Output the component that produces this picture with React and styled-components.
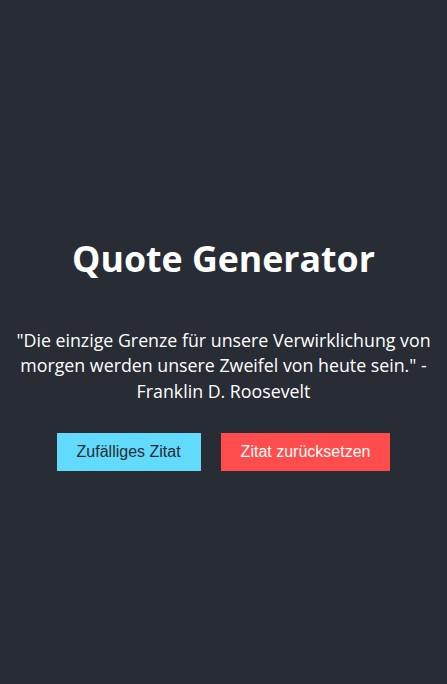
import styled, { createGlobalStyle } from 'styled-components'

const GlobalStyle = createGlobalStyle`
  body {
    margin: 0;
    background: #282c34;
    font-family: "Open Sans", "Noto Sans", sans-serif;
  }
`

const Page = styled.div`
  min-height: 100vh;
  display: flex;
  flex-direction: column;
  align-items: center;
  justify-content: center;
  text-align: center;
  color: #ffffff;
  padding: 0 10px;
  box-sizing: border-box;
`

const Title = styled.h1`
  font-size: 35.7px;
  font-weight: 700;
  margin: 31px 0 25px;
`

const Quote = styled.p`
  font-size: 17.8px;
  margin: 21px 0 19px;
  line-height: 25.5px;
`

const Actions = styled.div`
  display: flex;
  justify-content: center;
`

const Button = styled.button`
  font-family: "Liberation Sans", Arial, sans-serif;
  font-size: 16px;
  padding: 10px 20px;
  margin: 10px;
  border: none;
  cursor: pointer;
  background: ${(p) => (p.$danger ? '#ff4c4c' : '#61dafb')};
  color: ${(p) => (p.$danger ? '#ffffff' : '#282c34')};
`

const App = () => {
  return (
    <>
      <GlobalStyle />
      <Page>
        <Title>Quote Generator</Title>
        <Quote>
          "Die einzige Grenze für unsere Verwirklichung von morgen werden unsere Zweifel von heute sein." - Franklin D. Roosevelt
        </Quote>
        <Actions>
          <Button>Zufälliges Zitat</Button>
          <Button $danger>Zitat zurücksetzen</Button>
        </Actions>
      </Page>
    </>
  )
}

export default App
